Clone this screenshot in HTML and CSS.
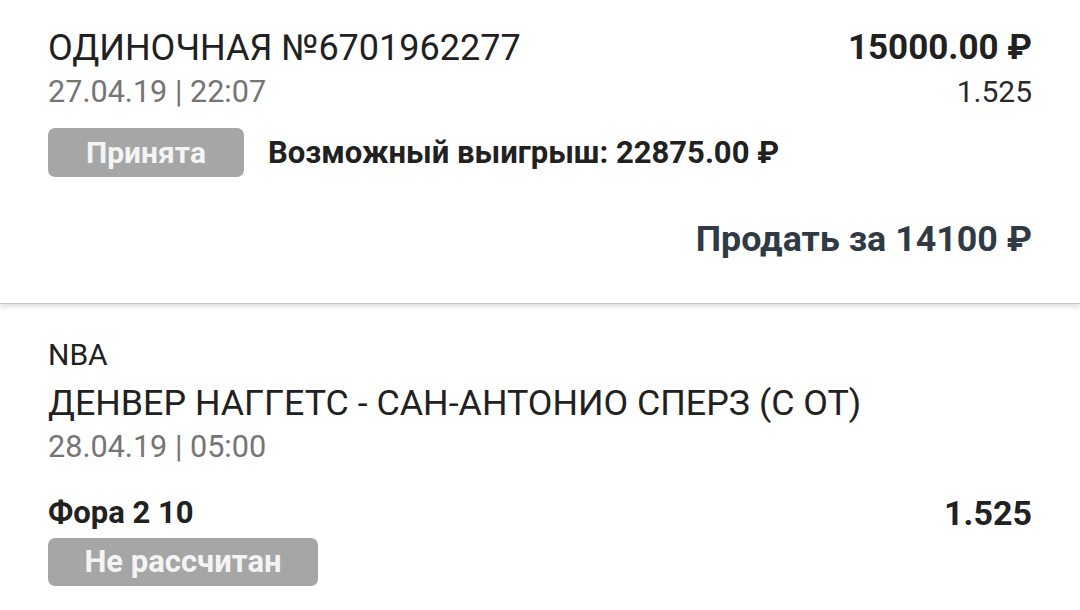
FILE: index.html
```html
<!DOCTYPE html>
<html lang="ru">
<head>
<meta charset="utf-8">
<link rel="stylesheet" href="styles.css">
</head>
<body>
<section class="card card-top">
  <div class="row">
    <div class="col">
      <div class="title">ОДИНОЧНАЯ №6701962277</div>
      <div class="date">27.04.19 | 22:07</div>
    </div>
    <div class="col col-right">
      <div class="amount">15000.00 ₽</div>
      <div class="coef">1.525</div>
    </div>
  </div>
  <div class="status-row">
    <span class="badge badge-accepted">Принята</span>
    <span class="win">Возможный выигрыш: 22875.00 ₽</span>
  </div>
  <div class="sell">Продать за 14100 ₽</div>
</section>
<section class="card card-event">
  <div class="league">NBA</div>
  <div class="title match">ДЕНВЕР НАГГЕТС - САН-АНТОНИО СПЕРЗ (С ОТ)</div>
  <div class="date">28.04.19 | 05:00</div>
  <div class="row outcome-row">
    <div class="col">
      <div class="outcome">Фора 2 10</div>
      <span class="badge badge-pending">Не рассчитан</span>
    </div>
    <div class="coef-big">1.525</div>
  </div>
</section>
</body>
</html>
```

FILE: styles.css
```css
* { box-sizing: border-box; }
html, body {
  margin: 0;
  padding: 0;
  background: #ffffff;
  font-family: Roboto, "Noto Sans", "Liberation Sans", sans-serif;
  color: #212121;
}
body { width: 1080px; height: 610px; overflow: hidden; }

.card { padding: 0 48px; background: #fff; }

.card-top {
  padding-top: 24px;
  padding-bottom: 40px;
  border-bottom: 1px solid #c4c4c4;
  box-shadow: 0 3px 5px rgba(0,0,0,0.12);
  position: relative;
  z-index: 1;
}

.row { display: flex; justify-content: space-between; }
.col { display: flex; flex-direction: column; align-items: flex-start; }
.col-right { align-items: flex-end; }

.title { font-size: 36px; line-height: 48px; font-weight: 400; }
.match { font-size: 35.8px; }
.date { font-size: 30.6px; line-height: 40px; color: #757575; }
.amount { font-size: 35px; line-height: 48px; font-weight: 700; }
.coef { font-size: 30px; line-height: 40px; color: #2a2a2a; }

.status-row {
  display: flex;
  align-items: center;
  gap: 24px;
  margin-top: 16px;
}
.badge {
  display: inline-block;
  background: #a6a6a6;
  color: #f4f4f4;
  font-weight: 700;
  font-size: 30px;
  border-radius: 7px;
  text-align: center;
}
.badge-accepted { width: 196px; height: 49px; line-height: 49px; }
.win { font-size: 31px; font-weight: 700; line-height: 40px; }

.sell {
  margin-top: 38px;
  text-align: right;
  font-size: 35.8px;
  line-height: 48px;
  font-weight: 700;
  color: #2f3a44;
}

.card-event { padding-top: 31px; }
.league { font-size: 30px; line-height: 40px; }
.match { margin-top: 4px; }
.outcome-row { margin-top: 26px; }
.outcome { font-size: 31px; line-height: 40px; font-weight: 700; }
.badge-pending { margin-top: 5px; width: 270px; height: 48px; line-height: 48px; font-size: 31px; }
.coef-big { font-size: 34px; line-height: 40px; font-weight: 700; }
```
